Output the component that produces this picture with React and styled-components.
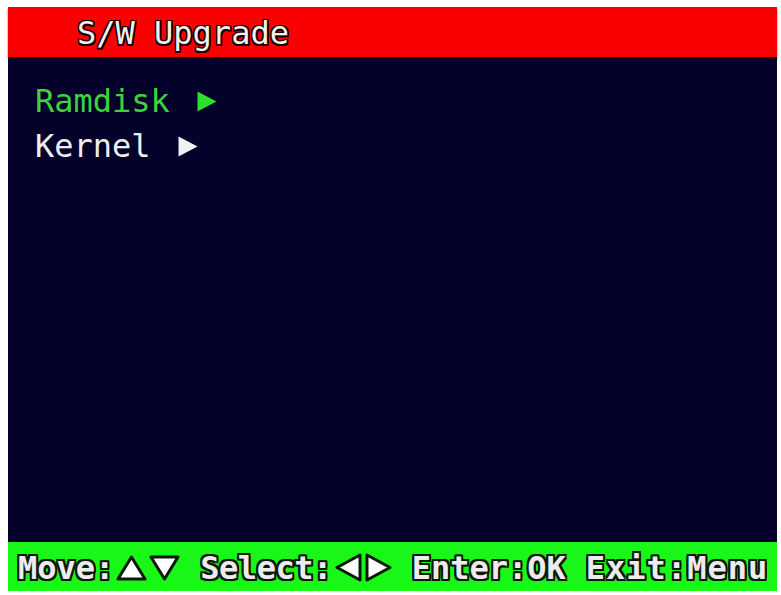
import React from "react";
import styled, { createGlobalStyle } from "styled-components";

const Global = createGlobalStyle`
  html, body { margin: 0; padding: 0; background: #ffffff; }
  body { width: 781px; height: 595px; overflow: hidden; }
`;

const Screen = styled.div`
  margin: 7px 0 0 8px;
  width: 769px;
  height: 584px;
  display: flex;
  flex-direction: column;
  background: #04012a;
  font-family: "DejaVu Sans Mono", "Liberation Mono", monospace;
`;

const outline = (c, w) => `
  text-shadow:
    ${w}px 0 0 ${c}, -${w}px 0 0 ${c}, 0 ${w}px 0 ${c}, 0 -${w}px 0 ${c},
    ${w}px ${w}px 0 ${c}, -${w}px ${w}px 0 ${c}, ${w}px -${w}px 0 ${c}, -${w}px -${w}px 0 ${c};
`;

const Header = styled.div`
  height: 50px;
  flex: none;
  background: #fb0000;
  display: flex;
  align-items: center;
  padding-left: 69px;
  box-shadow: 0 2px 2px rgba(40, 0, 0, 0.6);
`;

const Title = styled.span`
  color: #f4f0ee;
  font-size: 32px;
  line-height: 1;
  padding-top: 2px;
  ${outline("#1a0000", 1.5)}
`;

const Menu = styled.div`
  flex: 1;
  display: flex;
  flex-direction: column;
  gap: 7px;
  padding: 25px 0 0 27px;
`;

const Item = styled.div`
  display: flex;
  align-items: center;
  gap: ${(p) => p.$gap}px;
  height: 38px;
  font-size: 32px;
  color: ${(p) => (p.$active ? "#3ed23e" : "#eeeeee")};
`;

const Footer = styled.div`
  height: 47px;
  flex: none;
  background: #19f719;
  display: flex;
  align-items: center;
  gap: 20px;
  padding: 2px 0 0 10px;
`;

const Group = styled.div`
  display: flex;
  align-items: center;
  gap: ${(p) => p.$gap ?? 3}px;
`;

const Hint = styled.span`
  color: #ececec;
  font-size: 32px;
  font-weight: bold;
  line-height: 1;
  letter-spacing: ${(p) => p.$ls || 0}px;
  ${outline("#0a1a0a", 2)}
`;

const Tri = ({ dir, w, h, fill = "#ffffff", stroke = "#0a1a0a", sw = 3 }) => {
  const m = sw / 2 + 0.5;
  const pts = {
    up: `${m},${h - m} ${w / 2},${m} ${w - m},${h - m}`,
    down: `${m},${m} ${w - m},${m} ${w / 2},${h - m}`,
    left: `${w - m},${m} ${w - m},${h - m} ${m},${h / 2}`,
    right: `${m},${m} ${m},${h - m} ${w - m},${h / 2}`,
  }[dir];
  return (
    <svg width={w} height={h} viewBox={`0 0 ${w} ${h}`} style={{ display: "block" }}>
      <polygon points={pts} fill={fill} stroke={stroke} strokeWidth={sw} strokeLinejoin="round" />
    </svg>
  );
};

export default function App() {
  return (
    <>
      <Global />
      <Screen>
        <Header>
          <Title>S/W Upgrade</Title>
        </Header>
        <Menu>
          <Item $active $gap={27}>
            <span>Ramdisk</span>
            <Tri dir="right" w={20} h={21} fill="#2ee02e" stroke="none" sw={0} />
          </Item>
          <Item $gap={27}>
            <span>Kernel</span>
            <Tri dir="right" w={20} h={21} fill="#f2f2f2" stroke="none" sw={0} />
          </Item>
        </Menu>
        <Footer>
          <Group $gap={2}>
            <Hint>Move:</Hint>
            <Tri dir="up" w={31} h={26} />
            <Tri dir="down" w={31} h={26} />
          </Group>
          <Group $gap={3}>
            <Hint $ls={-0.5}>Select:</Hint>
            <Tri dir="left" w={27} h={29} />
            <Tri dir="right" w={27} h={29} />
          </Group>
          <Group>
            <Hint>Enter:OK</Hint>
          </Group>
          <Group>
            <Hint $ls={1}>Exit:Menu</Hint>
          </Group>
        </Footer>
      </Screen>
    </>
  );
}
